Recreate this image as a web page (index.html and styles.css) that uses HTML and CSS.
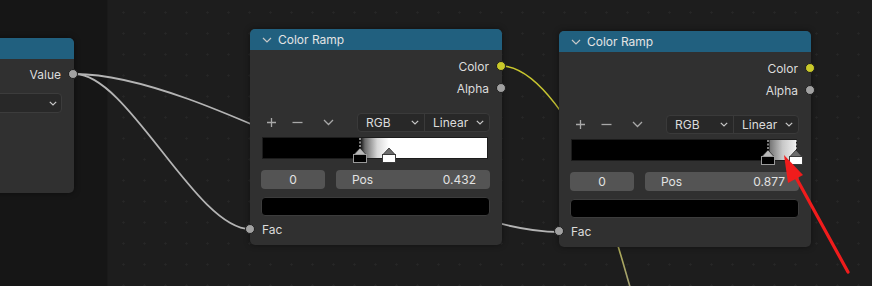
FILE: index.html
```html
<!DOCTYPE html>
<html lang="en">
  <head>
    <meta charset="UTF-8" />
    <meta name="viewport" content="width=device-width, initial-scale=1.0" />
    <title>Node Editor - Color Ramp</title>
    <link rel="stylesheet" href="styles.css">
  </head>
  <body>
    <div class="editor">
      <div class="strip"></div>
      <div class="grid"></div>

      <svg class="wires" width="872" height="286" viewBox="0 0 872 286">
        <defs>
          <linearGradient id="yellowWire" gradientUnits="userSpaceOnUse" x1="0" y1="66" x2="0" y2="286">
            <stop offset="0" stop-color="#c9c72c" />
            <stop offset="0.75" stop-color="#b3b04a" />
            <stop offset="1" stop-color="#a29f72" />
          </linearGradient>
        </defs>
        <path d="M75 74 C205 74 430 232 559 232" class="wire" />
        <path d="M75 74 C128 74 196 229 250 229" class="wire" />
        <path d="M501 66 C535 66 578 125 600 190 S624 268 634 300" class="wire yellow" />
      </svg>

      <!-- node on the left, mostly off screen -->
      <div class="node node-value">
        <div class="node-header"></div>
        <div class="node-body">
          <div class="socket-row out">Value<span class="socket"></span></div>
          <div class="select wide">
            <svg class="chev" width="8" height="5" viewBox="0 0 8 5"><path d="M0.8 0.8 L4 4 L7.2 0.8" /></svg>
          </div>
        </div>
      </div>

      <div class="node ramp-node node-a">
        <div class="node-header">
          <svg class="head-chev" width="10" height="6" viewBox="0 0 10 6"><path d="M1 1 L5 5 L9 1" /></svg>
          Color Ramp
        </div>
        <div class="node-body">
          <div class="socket-row out">Color<span class="socket yellow"></span></div>
          <div class="socket-row out">Alpha<span class="socket"></span></div>
          <div class="ramp-tools">
            <svg class="tool" width="11" height="11" viewBox="0 0 11 11"><path d="M5.5 1 V10 M1 5.5 H10" /></svg>
            <svg class="tool minus" width="11" height="11" viewBox="0 0 11 11"><path d="M0.5 5.5 H10.5" /></svg>
            <svg class="tool down" width="11" height="11" viewBox="0 0 11 11"><path d="M1 3 L5.5 7.5 L10 3" /></svg>
            <div class="select-group">
              <div class="select rgb">RGB<svg class="chev" width="8" height="5" viewBox="0 0 8 5"><path d="M0.8 0.8 L4 4 L7.2 0.8" /></svg></div>
              <div class="select">Linear<svg class="chev" width="8" height="5" viewBox="0 0 8 5"><path d="M0.8 0.8 L4 4 L7.2 0.8" /></svg></div>
            </div>
          </div>
          <div class="ramp-bar" style="background: linear-gradient(to right, #000 0%, #000 43.2%, #6a6a6a 45.5%, #d8d8d8 51%, #fff 56.25%, #fff 100%);">
            <div class="stop active" style="left: 43.2%;">
              <svg width="14" height="25" viewBox="0 0 14 25"><line x1="7" y1="0" x2="7" y2="10" /><polygon points="7,10 13,16.5 1,16.5" /><rect x="0.5" y="16.5" width="13" height="8" /></svg>
            </div>
            <div class="stop white" style="left: 56.25%;">
              <svg width="14" height="25" viewBox="0 0 14 25"><line x1="7" y1="0" x2="7" y2="10" /><polygon points="7,10 13,16.5 1,16.5" /><rect x="0.5" y="16.5" width="13" height="8" /></svg>
            </div>
          </div>
          <div class="stop-fields">
            <div class="field index">0</div>
            <div class="field pos"><span>Pos</span><span>0.432</span></div>
          </div>
          <div class="swatch"></div>
          <div class="socket-row in"><span class="socket"></span>Fac</div>
        </div>
      </div>

      <div class="node ramp-node node-b">
        <div class="node-header">
          <svg class="head-chev" width="10" height="6" viewBox="0 0 10 6"><path d="M1 1 L5 5 L9 1" /></svg>
          Color Ramp
        </div>
        <div class="node-body">
          <div class="socket-row out">Color<span class="socket yellow"></span></div>
          <div class="socket-row out">Alpha<span class="socket"></span></div>
          <div class="ramp-tools">
            <svg class="tool" width="11" height="11" viewBox="0 0 11 11"><path d="M5.5 1 V10 M1 5.5 H10" /></svg>
            <svg class="tool minus" width="11" height="11" viewBox="0 0 11 11"><path d="M0.5 5.5 H10.5" /></svg>
            <svg class="tool down" width="11" height="11" viewBox="0 0 11 11"><path d="M1 3 L5.5 7.5 L10 3" /></svg>
            <div class="select-group">
              <div class="select rgb">RGB<svg class="chev" width="8" height="5" viewBox="0 0 8 5"><path d="M0.8 0.8 L4 4 L7.2 0.8" /></svg></div>
              <div class="select">Linear<svg class="chev" width="8" height="5" viewBox="0 0 8 5"><path d="M0.8 0.8 L4 4 L7.2 0.8" /></svg></div>
            </div>
          </div>
          <div class="ramp-bar" style="background: linear-gradient(to right, #000 0%, #000 87.7%, #7a7a7a 88.6%, #c8c8c8 94%, #f0f0f0 100%);">
            <div class="stop active" style="left: 87.7%;">
              <svg width="14" height="25" viewBox="0 0 14 25"><line x1="7" y1="0" x2="7" y2="10" /><polygon points="7,10 13,16.5 1,16.5" /><rect x="0.5" y="16.5" width="13" height="8" /></svg>
            </div>
            <div class="stop white" style="left: 100%;">
              <svg width="14" height="25" viewBox="0 0 14 25"><line x1="7" y1="0" x2="7" y2="10" /><polygon points="7,10 13,16.5 1,16.5" /><rect x="0.5" y="16.5" width="13" height="8" /></svg>
            </div>
          </div>
          <div class="stop-fields">
            <div class="field index">0</div>
            <div class="field pos"><span>Pos</span><span>0.877</span></div>
          </div>
          <div class="swatch"></div>
          <div class="socket-row in"><span class="socket"></span>Fac</div>
        </div>
      </div>

      <!-- annotation arrow -->
      <svg class="arrow" width="872" height="286" viewBox="0 0 872 286">
        <line x1="848" y1="272" x2="793" y2="172" />
        <polygon points="784,155 803,175 788,183" />
      </svg>
    </div>
  </body>
</html>
```

FILE: styles.css
```css
body {
  margin: 0;
  background-color: #1d1d1d;
  font-family: Inter, "Noto Sans", sans-serif;
  font-size: 12px;
  color: #dcdcdc;
}
.editor {
  position: relative;
  width: 872px;
  height: 286px;
  display: flex;
  overflow: hidden;
}
.strip {
  width: 107px;
  background-color: #161616;
  border-right: 1px solid #1a1a1a;
}
.grid {
  flex: 1;
  background-color: #1d1d1d;
  background-image: radial-gradient(circle, #272727 0.9px, transparent 1.3px);
  background-size: 21px 21px;
  background-position: 5px 2px;
}
.wires,
.arrow {
  position: absolute;
  left: 0;
  top: 0;
}
.wire {
  fill: none;
  stroke: #b4b4b4;
  stroke-width: 1.8;
}
.wire.yellow {
  stroke: url(#yellowWire);
  stroke-width: 1.6;
}
.arrow {
  pointer-events: none;
}
.arrow line {
  stroke: #f01c1c;
  stroke-width: 3.2;
  stroke-linecap: round;
}
.arrow polygon {
  fill: #f01c1c;
}

/* nodes */
.node {
  position: absolute;
  display: flex;
  flex-direction: column;
  background-color: #303030;
  border-radius: 5px;
  box-shadow: 0 0 6px rgba(0, 0, 0, 0.45);
}
.node-header {
  height: 21px;
  flex: none;
  display: flex;
  align-items: center;
  padding-left: 12px;
  background-color: #21607f;
  border-radius: 5px 5px 0 0;
  color: #e4e4e4;
}
.head-chev {
  margin-right: 6px;
}
.head-chev path,
.chev path,
.tool path {
  fill: none;
  stroke: #c8c8c8;
  stroke-width: 1.2;
}
.node-body {
  display: flex;
  flex-direction: column;
  padding: 5px 12px 5px 11px;
}
.socket-row {
  position: relative;
  height: 22px;
  display: flex;
  align-items: center;
}
.socket-row.out {
  justify-content: flex-end;
  padding-right: 1px;
}
.socket-row.in {
  margin-top: 2px;
  padding-left: 1px;
}
.socket {
  position: absolute;
  top: 6px;
  right: -16px;
  width: 10px;
  height: 10px;
  border-radius: 50%;
  box-sizing: border-box;
  background-color: #a1a1a1;
  border: 1px solid #1e1e1e;
}
.socket.yellow {
  background-color: #c9c92a;
}
.socket-row.in .socket {
  right: auto;
  left: -16px;
}

.node-value {
  left: -100px;
  top: 38px;
  width: 174px;
  height: 155px;
}
.node-value .node-body {
  padding-top: 4px;
}
.select.wide {
  flex: none;
  margin-top: 8px;
  height: 20px;
  justify-content: flex-end;
  padding-right: 4px;
  border: 1px solid #3c3c3c;
  border-radius: 4px;
  background-color: #282828;
}

.ramp-node {
  width: 252px;
  height: 216px;
}
.node-a {
  left: 250px;
  top: 29px;
}
.node-b {
  left: 559px;
  top: 31px;
}
.ramp-tools {
  margin-top: 13px;
  height: 20px;
  display: flex;
  align-items: center;
  padding-left: 5px;
}
.tool path {
  stroke: #a8a8a8;
  stroke-width: 1.3;
}
.tool.minus {
  margin-left: 15px;
}
.tool.down {
  margin-left: 20px;
}
.select-group {
  margin-left: auto;
  width: 133px;
  height: 19px;
  display: flex;
  box-sizing: border-box;
  border: 1px solid #3a3a3a;
  border-radius: 4px;
  background-color: #282828;
}
.select {
  display: flex;
  align-items: center;
  box-sizing: border-box;
  flex: 1;
  padding: 0 5px 0 8px;
}
.select .chev {
  margin-left: auto;
}
.select.rgb {
  flex: none;
  width: 67px;
  border-right: 1px solid #3a3a3a;
}

.ramp-bar {
  position: relative;
  margin: 6px 3px 0 2px;
  height: 20px;
  box-shadow: 0 0 0 1px #1c1c1c;
}
.stop {
  position: absolute;
  top: 0;
  width: 14px;
  height: 25px;
  margin-left: -7px;
}
.stop line {
  stroke: #ffffff;
  stroke-width: 1;
  stroke-dasharray: 2 1.5;
}
.stop polygon {
  fill: #6c6c6c;
  stroke: #2a2a2a;
  stroke-width: 0.8;
}
.stop rect {
  fill: #ffffff;
  stroke: #3a3a3a;
}
.stop.active polygon {
  fill: #b8b8b8;
}
.stop.active rect {
  fill: #000000;
  stroke: #9a9a9a;
}

.stop-fields {
  margin-top: 12px;
  height: 19px;
  display: flex;
  gap: 11px;
}
.field {
  display: flex;
  align-items: center;
  border-radius: 4px;
  background-color: #545454;
  color: #e2e2e2;
}
.field.index {
  width: 64px;
  justify-content: center;
}
.field.pos {
  flex: 1;
  justify-content: space-between;
  padding: 0 14px 0 16px;
}
.swatch {
  margin-top: 8px;
  height: 19px;
  box-sizing: border-box;
  background-color: #000;
  border: 1px solid #3c3c3c;
  border-radius: 4px;
}
```
